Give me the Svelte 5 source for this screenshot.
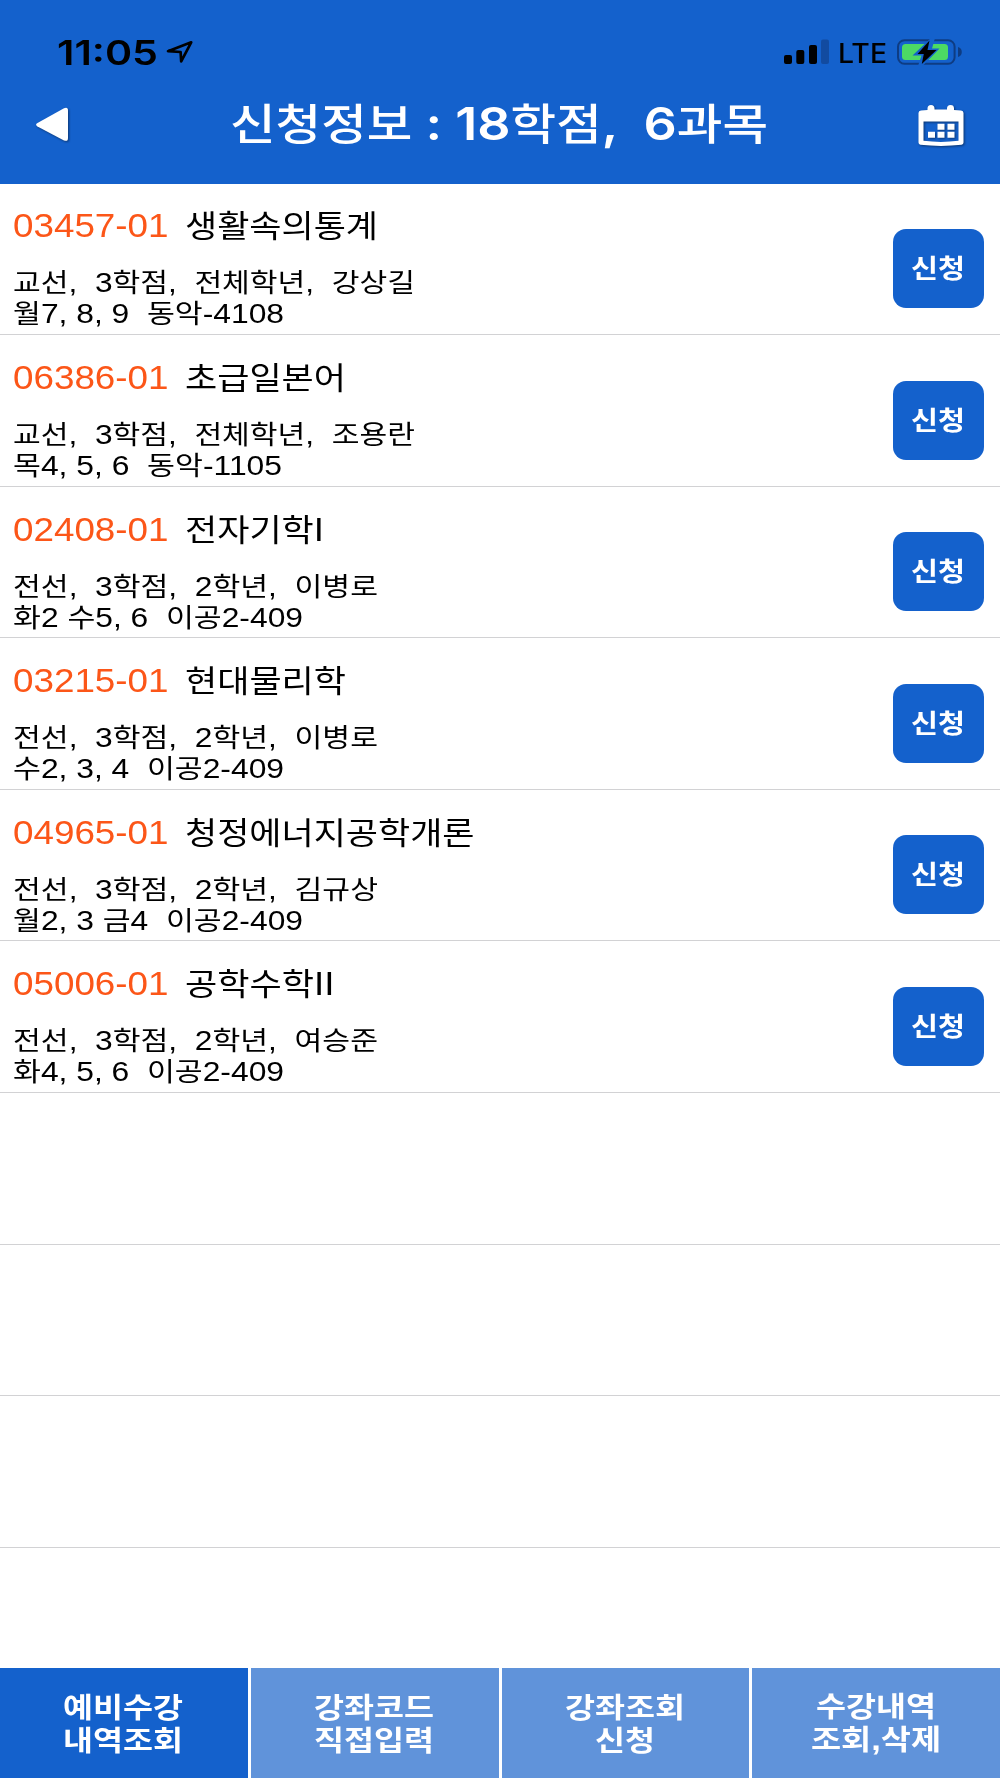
<script>
  const courses = [
    { code: '03457-01', name: '생활속의통계', nameW: 193, info: '교선,  3학점,  전체학년,  강상길', infoW: 402, time: '월7, 8, 9  동악-4108', timeW: 271 },
    { code: '06386-01', name: '초급일본어', nameW: 161, info: '교선,  3학점,  전체학년,  조용란', infoW: 402, time: '목4, 5, 6  동악-1105', timeW: 269 },
    { code: '02408-01', name: '전자기학I', nameW: 139, info: '전선,  3학점,  2학년,  이병로', infoW: 365, time: '화2 수5, 6  이공2-409', timeW: 290 },
    { code: '03215-01', name: '현대물리학', nameW: 161, info: '전선,  3학점,  2학년,  이병로', infoW: 365, time: '수2, 3, 4  이공2-409', timeW: 271 },
    { code: '04965-01', name: '청정에너지공학개론', nameW: 289.5, info: '전선,  3학점,  2학년,  김규상', infoW: 365, time: '월2, 3 금4  이공2-409', timeW: 290 },
    { code: '05006-01', name: '공학수학II', nameW: 149.5, info: '전선,  3학점,  2학년,  여승준', infoW: 365, time: '화4, 5, 6  이공2-409', timeW: 271 },
  ];
  const emptyRows = [0, 1, 2];
  const tabs = [
    { lines: [['예비수강', 120], ['내역조회', 120]], active: true },
    { lines: [['강좌코드', 120], ['직접입력', 120]] },
    { lines: [['강좌조회', 120], ['신청', 60]] },
    { lines: [['수강내역', 120], ['조회,삭제', 130]] },
  ];

  // Splits a string into Hangul runs and everything else.
  const runs = (text) => text.match(/[가-힣]+|[^가-힣]+/g) ?? [];

  // Widens the text horizontally until it fills its box.
  function stretch(node) {
    const fit = () => {
      node.style.transform = 'none';
      const natural = node.getBoundingClientRect().width;
      const target = node.parentElement.getBoundingClientRect().width;
      node.style.transform = `scaleX(${target / natural})`;
    };
    fit();
    document.fonts?.ready.then(fit);
  }
</script>

{#snippet wide(text, width)}
  <span class="wide" style:width="{width}px"><span class="glyphs" use:stretch>{#each runs(text) as run}<span class:latin={!/[가-힣]/.test(run)}>{run}</span>{/each}</span></span>
{/snippet}

<div class="screen">
  <header>
    <div class="status">
      <div class="clock">{@render wide('11:05', 101)}</div>
      <svg class="location" width="28" height="24" viewBox="0 0 28 24">
        <path d="M2 11.2 25.2 2.3 15.2 21.3 14.6 12Z" fill="none" stroke="#000" stroke-width="2.7" stroke-linejoin="round" />
      </svg>
      <svg class="signal" width="46" height="26" viewBox="0 0 46 26">
        <rect x="0" y="16" width="8" height="9" rx="2" />
        <rect x="12.3" y="11" width="8" height="14" rx="2" />
        <rect x="25" y="6" width="8" height="19" rx="2" />
        <rect x="37" y="0.5" width="8" height="24.5" rx="2" fill="#124ba0" />
      </svg>
      <div class="network">{@render wide('LTE', 49)}</div>
      <svg class="battery" width="66" height="28" viewBox="0 0 66 28">
        <rect x="1" y="2.2" width="56.6" height="23.6" rx="6.5" fill="none" stroke="#0e3c83" stroke-width="2" />
        <path d="M61 9c2.4.7 3.8 2.6 3.8 5s-1.4 4.3-3.8 5z" fill="#0e3c83" />
        <rect x="5" y="6" width="46" height="16" rx="3.5" fill="#4cd964" />
        <path d="M34 0 15.5 17.5h9L21 28h4.500L42.500 10.500h-7.500L38 0z" fill="#1461cc" />
        <path d="M32.500 2.500 20.500 16h6.300L24.800 26 39.500 12H30.500z" />
      </svg>
    </div>
    <div class="nav">
      <svg class="back" width="38" height="40" viewBox="0 0 38 40">
        <path d="M3.5 18.1 30 3.2Q34 1.6 34 5.5V33Q34 37 30 35.4L3.5 21.4Q.6 19.800 3.500 18.100Z" fill="#fff" />
      </svg>
      <h1>{@render wide('신청정보 : 18학점,  6과목', 538)}</h1>
      <svg class="calendar" width="48" height="44" viewBox="0 0 48 44">
        <path fill="#fff" fill-rule="evenodd" d="M1.5 9Q1.5 6.5 4 6.4L10.5 6V4.5a3.5 3.5 0 0 1 7 0V5.5h12.500V4.5a3.5 3.5 0 0 1 7 0V6L44 6.400Q46.500 6.500 46.500 9V38.500Q46.500 40.500 44.500 40.800Q24 43 3.500 40.800Q1.500 40.500 1.500 38.500ZM6.500 17.500V36.800Q24 39 41.500 36.800V17.500Z" />
        <path fill="#fff" d="M20.500 19.800h7v6h-7zM30.500 19.800h7v6h-7zM11 27.800h7v6h-7zM20.500 27.800h7v6h-7zM30.500 27.800h7v6h-7z" />
      </svg>
    </div>
  </header>

  <main>
    {#each courses as c}
      <section class="row">
        <div class="text">
          <div class="title">
            <span class="code">{@render wide(c.code, 155.5)}</span>
            {@render wide(c.name, c.nameW)}
          </div>
          <div class="detail">{@render wide(c.info, c.infoW)}</div>
          <div class="detail">{@render wide(c.time, c.timeW)}</div>
        </div>
        <button class="apply">{@render wide('신청', 54)}</button>
      </section>
    {/each}
    {#each emptyRows as r}
      <section class="row"></section>
    {/each}
  </main>

  <nav class="tabs">
    {#each tabs as tab}
      <button class="tab" class:active={tab.active}>
        {#each tab.lines as [text, width]}
          {@render wide(text, width)}
        {/each}
      </button>
    {/each}
  </nav>
</div>

<style>
  :global(body) { margin: 0; background: #fff; }
  .screen {
    display: flex;
    flex-direction: column;
    width: 1000px;
    height: 1778px;
    overflow: hidden;
    color: #000;
    font-family: 'Noto Sans CJK KR', sans-serif;
  }
  .wide { display: block; flex: none; white-space: pre; text-align: left; }
  .glyphs { display: inline-block; transform-origin: 0 50%; }
  .latin { font-family: 'Liberation Sans', sans-serif; font-size: 1.05em; }

  header {
    box-sizing: border-box;
    flex: none;
    height: 184px;
    margin-bottom: -0.6px;
    background: #1461cc;
  }
  .status {
    box-sizing: border-box;
    display: flex;
    align-items: center;
    height: 72px;
    padding: 32px 37px 0 56.5px;
  }
  .status .latin { font-family: Inter, sans-serif; font-size: 1em; }
  .clock { font-size: 34px; font-weight: 600; line-height: 40px; }
  .location { margin-left: 8.5px; }
  .signal { margin-left: auto; }
  .network { margin: 0 10px 0 8px; font-size: 26.5px; font-weight: 500; line-height: 40px; }
  .nav {
    display: flex;
    align-items: center;
    justify-content: space-between;
    height: 104px;
    padding: 0 35px 0 34px;
    color: #fff;
  }
  .back, .calendar { filter: drop-shadow(1px 1px 1px rgb(0 0 0 / 0.45)); }
  .back { margin-top: 1px; }
  .calendar { margin-top: 3px; }
  h1 { margin: -3px 0 0 8px; font-size: 43px; font-weight: 500; line-height: 60px; }
  h1 .latin { font-family: Inter, sans-serif; font-weight: 600; }

  main { flex: 1; min-height: 0; }
  .row {
    box-sizing: border-box;
    display: flex;
    justify-content: space-between;
    height: 151.6px;
    padding: 0 16px 0 13px;
    border-bottom: 1px solid #d2d2d4;
  }
  .title {
    display: flex;
    gap: 16px;
    height: 82px;
    font-size: 31px;
    line-height: 82px;
  }
  .code { color: #fc5618; }
  .detail { height: 31px; font-size: 26.5px; line-height: 31px; }
  button { padding: 0; border: 0; color: #fff; font-family: inherit; font-weight: 700; }
  .apply {
    box-sizing: border-box;
    display: flex;
    align-items: center;
    justify-content: center;
    width: 91px;
    height: 79px;
    margin-top: 45.5px;
    padding: 0 2px 3px 0;
    border-radius: 13px;
    background: #1461cc;
    font-size: 26.5px;
    line-height: 40px;
  }

  .tabs {
    display: grid;
    grid-template-columns: repeat(4, 1fr);
    gap: 3px;
    flex: none;
    height: 110.4px;
  }
  .tab {
    display: flex;
    flex-direction: column;
    align-items: center;
    justify-content: center;
    padding-right: 1px;
    background: #6093da;
    font-size: 28px;
    line-height: 33px;
  }
  .tab.active { background: #1461cc; }
</style>
